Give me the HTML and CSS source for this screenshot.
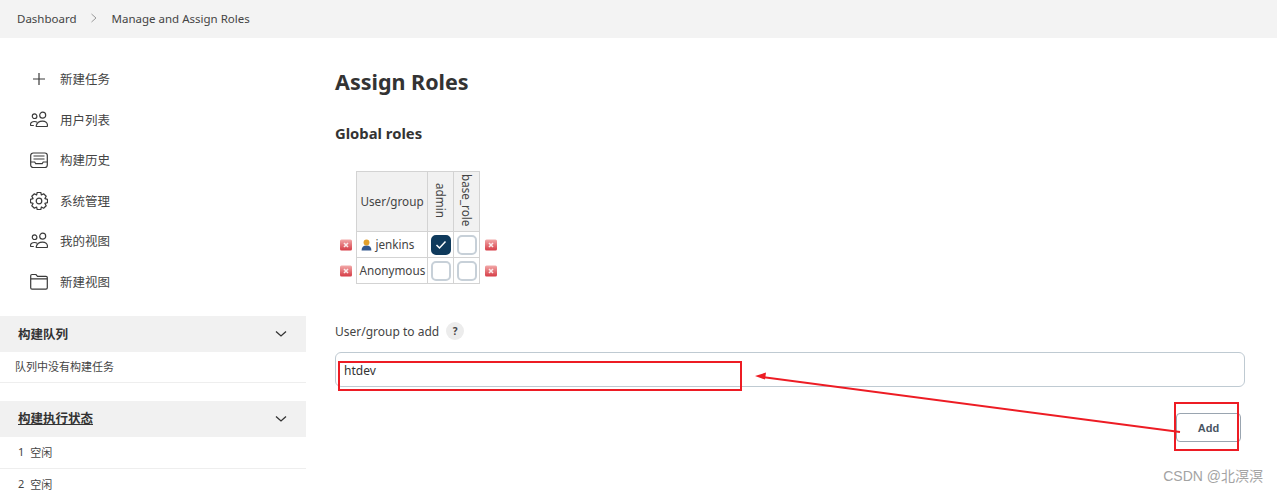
FILE: index.html
```html
<!DOCTYPE html>
<html lang="zh">
<head>
<meta charset="utf-8">
<title>Assign Roles</title>
<link rel="stylesheet" href="styles.css">
</head>
<body>
<nav class="crumbs">
  <a>Dashboard</a>
  <svg class="crumb-sep" viewBox="0 0 8 10" width="8" height="10"><path d="M1.5 1l4.5 4-4.5 4" fill="none" stroke="#9a9a9a" stroke-width="1"/></svg>
  <a>Manage and Assign Roles</a>
</nav>
<div class="page">
  <aside class="side">
    <ul class="tasks">
      <li class="task"><svg class="ico" viewBox="0 0 18 18"><path d="M9 3v12M3 9h12"/></svg><span>新建任务</span></li>
      <li class="task"><svg class="ico" viewBox="0 0 18 18"><circle cx="12.700" cy="4.200" r="3"/><circle cx="4.600" cy="5.200" r="2.300"/><path d="M6.300 15.500h10.200c.6 0 1-.4 1-1 0-2.800-2.200-4.300-5-4.300s-5.500 1.500-6.200 4.300c-.2.600 0 1 0 1zM3.800 14.500H1.200c-.5 0-.7-.3-.7-.8 0-2 1.700-3.200 4-3.200 1 0 1.900.2 2.600.7"/></svg><span>用户列表</span></li>
      <li class="task"><svg class="ico" viewBox="0 0 18 18"><rect x=".7" y="2" width="16.600" height="14.500" rx="2.500"/><path d="M.7 11h4l1 1.700h6.500l1-1.700h4M3.500 5h11M3.500 8h11"/></svg><span>构建历史</span></li>
      <li class="task"><svg class="ico" viewBox="1 1 18 18"><circle cx="10" cy="10" r="2.800"/><path d="M8.200 1.500h3.600l.6 2.500 2.200-1.200 2.600 2.500-1.300 2.300 2.600.7v3.400l-2.600.7 1.300 2.300-2.600 2.500-2.200-1.200-.6 2.500H8.200l-.6-2.500-2.200 1.200-2.600-2.500 1.300-2.300-2.600-.7V8.300l2.600-.7-1.300-2.300 2.600-2.500 2.200 1.200z" stroke-linejoin="round"/></svg><span>系统管理</span></li>
      <li class="task"><svg class="ico" viewBox="0 0 18 18"><circle cx="12.700" cy="4.200" r="3"/><circle cx="4.600" cy="5.200" r="2.300"/><path d="M6.300 15.500h10.200c.6 0 1-.4 1-1 0-2.800-2.200-4.300-5-4.300s-5.500 1.500-6.200 4.300c-.2.600 0 1 0 1zM3.800 14.500H1.200c-.5 0-.7-.3-.7-.8 0-2 1.700-3.200 4-3.200 1 0 1.900.2 2.600.7"/></svg><span>我的视图</span></li>
      <li class="task"><svg class="ico" viewBox="0 0 18 18"><path d="M.7 2.800c0-.8.500-1.300 1.300-1.300h4l1.500 1.800H16c.8 0 1.300.5 1.300 1.300v10.200c0 .8-.5 1.300-1.300 1.300H2c-.8 0-1.300-.5-1.300-1.300zM.7 5.800h16.600"/></svg><span>新建视图</span></li>
    </ul>
    <section class="pane pane-queue">
      <header class="pane-head"><span>构建队列</span><svg class="chev" viewBox="0 0 12 8" width="12" height="8"><path d="M1 1.500l5 4.500 5-4.500"/></svg></header>
      <div class="pane-row pane-empty">队列中没有构建任务</div>
    </section>
    <section class="pane pane-exec">
      <header class="pane-head"><a class="pane-link">构建执行状态</a><svg class="chev" viewBox="0 0 12 8" width="12" height="8"><path d="M1 1.500l5 4.500 5-4.500"/></svg></header>
      <div class="pane-row"><span class="num">1</span>空闲</div>
      <div class="pane-row"><span class="num">2</span>空闲</div>
    </section>
  </aside>
  <main class="main">
    <h1 class="title">Assign Roles</h1>
    <h2 class="subtitle">Global roles</h2>
    <div class="grid-wrap">
      <div class="dels">
        <svg class="del" viewBox="0 0 12 12"><use href="#x"/></svg>
        <svg class="del" viewBox="0 0 12 12"><use href="#x"/></svg>
      </div>
      <table class="roles">
        <tr class="hdr"><th>User/group</th><th class="vert"><span>admin</span></th><th class="vert"><span>base_role</span></th></tr>
        <tr><td class="name"><svg class="user" viewBox="0 0 10 11" width="11" height="12"><path d="M.5 10.500c0-3 1.500-4.500 4.500-4.500s4.500 1.500 4.500 4.500z" fill="#33588f"/><circle cx="5" cy="3.200" r="2.700" fill="#e3a02c"/></svg>jenkins</td><td class="chk"><i class="cb on"><svg viewBox="0 0 12 10" width="12" height="10"><path d="M1.500 5l3 3 6-6.500" fill="none" stroke="#fff" stroke-width="1.500"/></svg></i></td><td class="chk"><i class="cb"></i></td></tr>
        <tr><td class="name">Anonymous</td><td class="chk"><i class="cb"></i></td><td class="chk"><i class="cb"></i></td></tr>
      </table>
      <div class="dels">
        <svg class="del" viewBox="0 0 12 12"><use href="#x"/></svg>
        <svg class="del" viewBox="0 0 12 12"><use href="#x"/></svg>
      </div>
    </div>
    <div class="field-label"><span>User/group to add</span><b class="help">?</b></div>
    <div class="text-input">htdev</div>
    <div class="actions"><button class="add">Add</button></div>
  </main>
</div>
<svg class="defs" width="0" height="0"><defs><linearGradient id="g" x1="0" y1="0" x2="0" y2="1"><stop offset="0" stop-color="#f2a9a9"/><stop offset="1" stop-color="#d63c46"/></linearGradient><g id="x"><rect x="0" y=".5" width="12" height="11" rx="1.500" fill="url(#g)"/><path d="M4 4l4 4M8 4l-4 4" stroke="#fbeaea" stroke-width="1.600"/></g></defs></svg>
<svg class="marks" width="1277" height="493" viewBox="0 0 1277 493">
  <g fill="none" stroke="#ed1c24" stroke-width="2">
    <rect x="339" y="362" width="402" height="28"/>
    <rect x="1175" y="403" width="63" height="47"/>
    <path d="M1180 432L762 377"/>
  </g>
  <path d="M755 376l11-3.500-1 7z" fill="#ed1c24"/>
</svg>
<div class="wm">CSDN @北溟溟</div>
</body>
</html>
```
FILE: styles.css
```css
* { box-sizing: border-box; }
html, body { margin: 0; height: 493px; overflow: hidden; background: #fff; }
body { font-family: "Noto Sans", "Noto Sans CJK SC", sans-serif; font-size: 13px; color: #333; position: relative; }
.crumbs { height: 38px; background: #f3f3f3; display: flex; align-items: center; padding: 0 0 2px 17px; font-size: 11.500px; color: #444; }
.crumb-sep { margin: 0 14px 0 13px; }
.page { display: flex; }
.side { width: 306px; flex: none; }
.tasks { list-style: none; margin: 0; padding: 21px 0 0; }
.task { height: 40.500px; display: flex; align-items: center; padding-left: 30px; font-size: 12.500px; color: #444; }
.task span { padding-bottom: 1px; }
.ico { width: 18px; height: 18px; margin-right: 12px; fill: none; stroke: #3a3a3a; stroke-width: 1.200; }
.pane-queue { margin-top: 14px; }
.pane-exec { margin-top: 18px; }
.pane-head { height: 36px; background: #f1f1f1; display: flex; align-items: center; justify-content: space-between; padding: 0 19px 0 18px; font-size: 12.500px; font-weight: 700; color: #333; }
.pane-head span { padding-bottom: 2px; }
.pane-link { text-decoration: underline; padding-bottom: 4px; }
.chev { fill: none; stroke: #333; stroke-width: 1.300; }
.pane-row { height: 32px; display: flex; align-items: center; padding: 0 0 2px 18px; font-size: 11px; color: #444; border-bottom: 1px solid #eee; }
.pane-empty { padding-left: 15px; height: 31px; font-size: 11px; }
.num { margin-right: 6px; }
.main { flex: 1; padding: 28px 32px 0 29px; }
.title { margin: 1px 0 0; font-size: 21.500px; line-height: 30px; font-weight: 700; color: #333; }
.subtitle { margin: 26px 0 0; font-size: 14.800px; line-height: 20px; font-weight: 700; color: #333; }
.grid-wrap { display: flex; align-items: flex-end; margin-top: 28px; }
.dels { display: flex; flex-direction: column; width: 21px; padding-left: 5px; }
.del { width: 12px; height: 12px; margin: 7px 0; display: block; }
.roles { border-collapse: collapse; font-size: 11.700px; color: #444; table-layout: fixed; width: 123px; }
.roles th, .roles td { border: 1px solid #d3d3d3; padding: 0; text-align: center; font-weight: 400; }
.roles th { background: #f1f1f1; height: 60px; width: 26px; }
.roles th:first-child { width: 71px; padding-bottom: 2px; }
.roles td { height: 26px; }
.roles td.name { text-align: left; padding: 0 0 2px 2.500px; }
.vert span { writing-mode: vertical-rl; display: inline-block; }
.name { white-space: nowrap; }
.user { margin: 0 4px 0 1px; vertical-align: -2px; }
.cb { display: inline-flex; align-items: center; justify-content: center; width: 20px; height: 20px; border: 2px solid #c7d0d8; border-radius: 5px; vertical-align: middle; background: #fff; }
.cb.on { background: #0f3a5c; border-color: #0f3a5c; }
.field-label { display: flex; align-items: center; gap: 7px; margin-top: 37px; font-size: 12px; color: #444; height: 20px; }
.help { width: 18px; height: 18px; border-radius: 50%; background: #ececec; display: flex; align-items: center; justify-content: center; font-size: 10px; }
.text-input { margin-top: 11px; height: 35px; border: 1px solid #bfcad2; border-radius: 6px; padding: 2px 8px 0; font-size: 12px; color: #333; line-height: 32px; display: flex; align-items: flex-start; }
.actions { display: flex; justify-content: flex-end; margin-top: 26px; padding-right: 4px; }
.add { width: 65px; height: 29px; background: #fff; border: 1px solid #9aa5b0; border-radius: 4px; font: 700 11px "Liberation Sans", sans-serif; color: #4a5563; }
.defs { position: absolute; }
.marks { position: absolute; left: 0; top: 0; pointer-events: none; }
.wm { position: absolute; right: 14px; top: 465px; font: 14px "Liberation Sans", "Noto Sans CJK SC", sans-serif; color: #a3a3a3; }
```
